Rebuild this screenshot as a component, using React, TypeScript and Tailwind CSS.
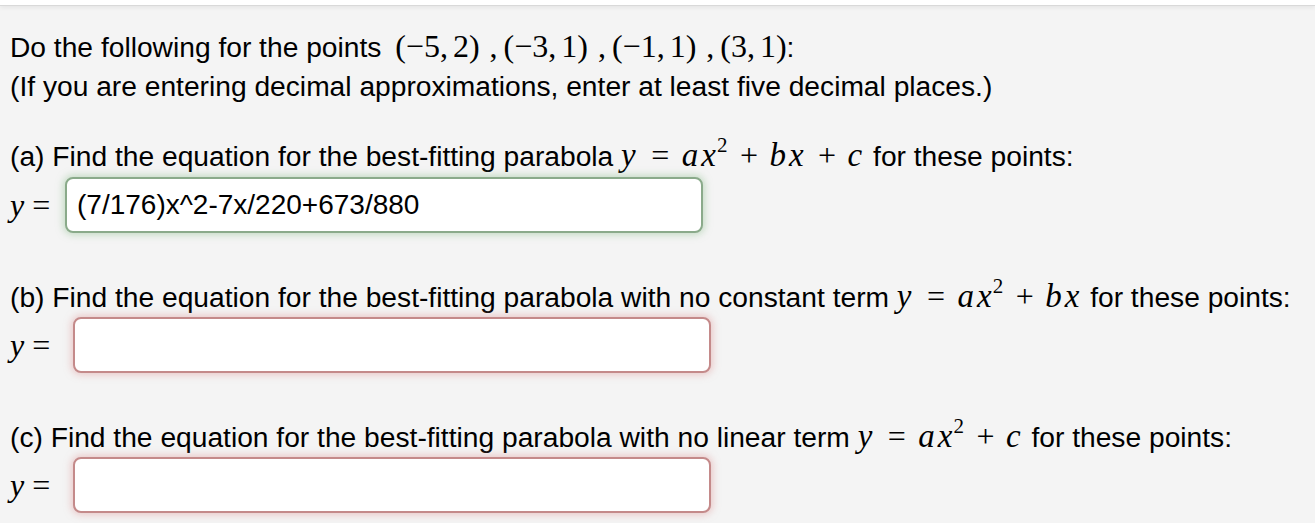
const sans = "font-['Liberation_Sans',Arial,sans-serif]";
const serif = "font-['Liberation_Serif','Times_New_Roman',serif]";

function I({ children }: { children: React.ReactNode }) {
  return <span className={`${serif} italic text-[33px] tracking-[3px]`}>{children}</span>;
}

function Op({ children, wide }: { children: React.ReactNode; wide?: boolean }) {
  return (
    <span
      className={`${serif} text-[32px] inline-block w-[25px] text-center ${wide ? "mx-[9px]" : "mx-[8px]"}`}
    >
      {children}
    </span>
  );
}

function Sq() {
  return (
    <span className={`${serif} text-[21px] leading-none relative -top-[14px] -ml-[2px] mr-[1px]`}>
      2
    </span>
  );
}

function Pt({ a, b }: { a: string; b: string }) {
  return (
    <span className={`${serif} text-[32px]`}>
      ({a},<span className="ml-[5px]">{b}</span>)
    </span>
  );
}

function Sep() {
  return <span className={`${serif} text-[32px] ml-[10px] mr-[6px]`}>,</span>;
}

function AnswerRow({
  value,
  state,
  gap,
}: {
  value?: string;
  state: "correct" | "wrong";
  gap: string;
}) {
  const box =
    state === "correct"
      ? "border-[#8aaa8a] shadow-[0_0_7px_2px_rgba(150,195,150,0.5)]"
      : "border-[#c48a8a] shadow-[0_0_7px_2px_rgba(225,160,160,0.5)]";
  return (
    <div className="flex items-center h-[57px]">
      <span className={`${serif} text-[32px] w-[47px] whitespace-pre`}>
        <span className="italic">y</span> =
      </span>
      <div
        className={`${gap} h-[56px] w-[638px] rounded-[8px] border-2 bg-white flex items-center pl-[10px] text-[28px] ${box}`}
      >
        {value}
      </div>
    </div>
  );
}

export default function App() {
  return (
    <div className={`${sans} text-black w-[1315px] h-[523px] bg-[#f4f4f4] overflow-hidden`}>
      <div className="h-[6px] bg-white border-b border-[#d9d9d9] shadow-[0_2px_4px_rgba(0,0,0,0.06)]" />
      <div className="pl-[10px] pt-[20px] text-[28.2px]">
        <div className="h-[40px] leading-[40px] whitespace-nowrap">
          Do the following for the points{" "}
          <span className="ml-[6px]">
            <Pt a="−5" b="2" />
            <Sep />
            <Pt a="−3" b="1" />
            <Sep />
            <Pt a="−1" b="1" />
            <Sep />
            <Pt a="3" b="1" />
          </span>
          :
        </div>
        <div className="h-[40px] leading-[40px] whitespace-nowrap">
          (If you are entering decimal approximations, enter at least five decimal places.)
        </div>

        <div className="mt-[29px] h-[40px] leading-[40px] whitespace-nowrap">
          (a) Find the equation for the best-fitting parabola <I>y</I>
          <Op wide>=</Op>
          <I>ax</I>
          <Sq />
          <Op>+</Op>
          <I>bx</I>
          <Op>+</Op>
          <I>c</I> for these points:
        </div>
        <div className="mt-[1px]">
          <AnswerRow value="(7/176)x^2-7x/220+673/880" state="correct" gap="ml-[8px]" />
        </div>

        <div className="mt-[43px] h-[40px] leading-[40px] whitespace-nowrap">
          (b) Find the equation for the best-fitting parabola with no constant term <I>y</I>
          <Op wide>=</Op>
          <I>ax</I>
          <Sq />
          <Op>+</Op>
          <I>bx</I> for these points:
        </div>
        <AnswerRow state="wrong" gap="ml-[16px]" />

        <div className="mt-[43px] h-[40px] leading-[40px] whitespace-nowrap">
          (c) Find the equation for the best-fitting parabola with no linear term <I>y</I>
          <Op wide>=</Op>
          <I>ax</I>
          <Sq />
          <Op>+</Op>
          <I>c</I> for these points:
        </div>
        <AnswerRow state="wrong" gap="ml-[16px]" />
      </div>
    </div>
  );
}
